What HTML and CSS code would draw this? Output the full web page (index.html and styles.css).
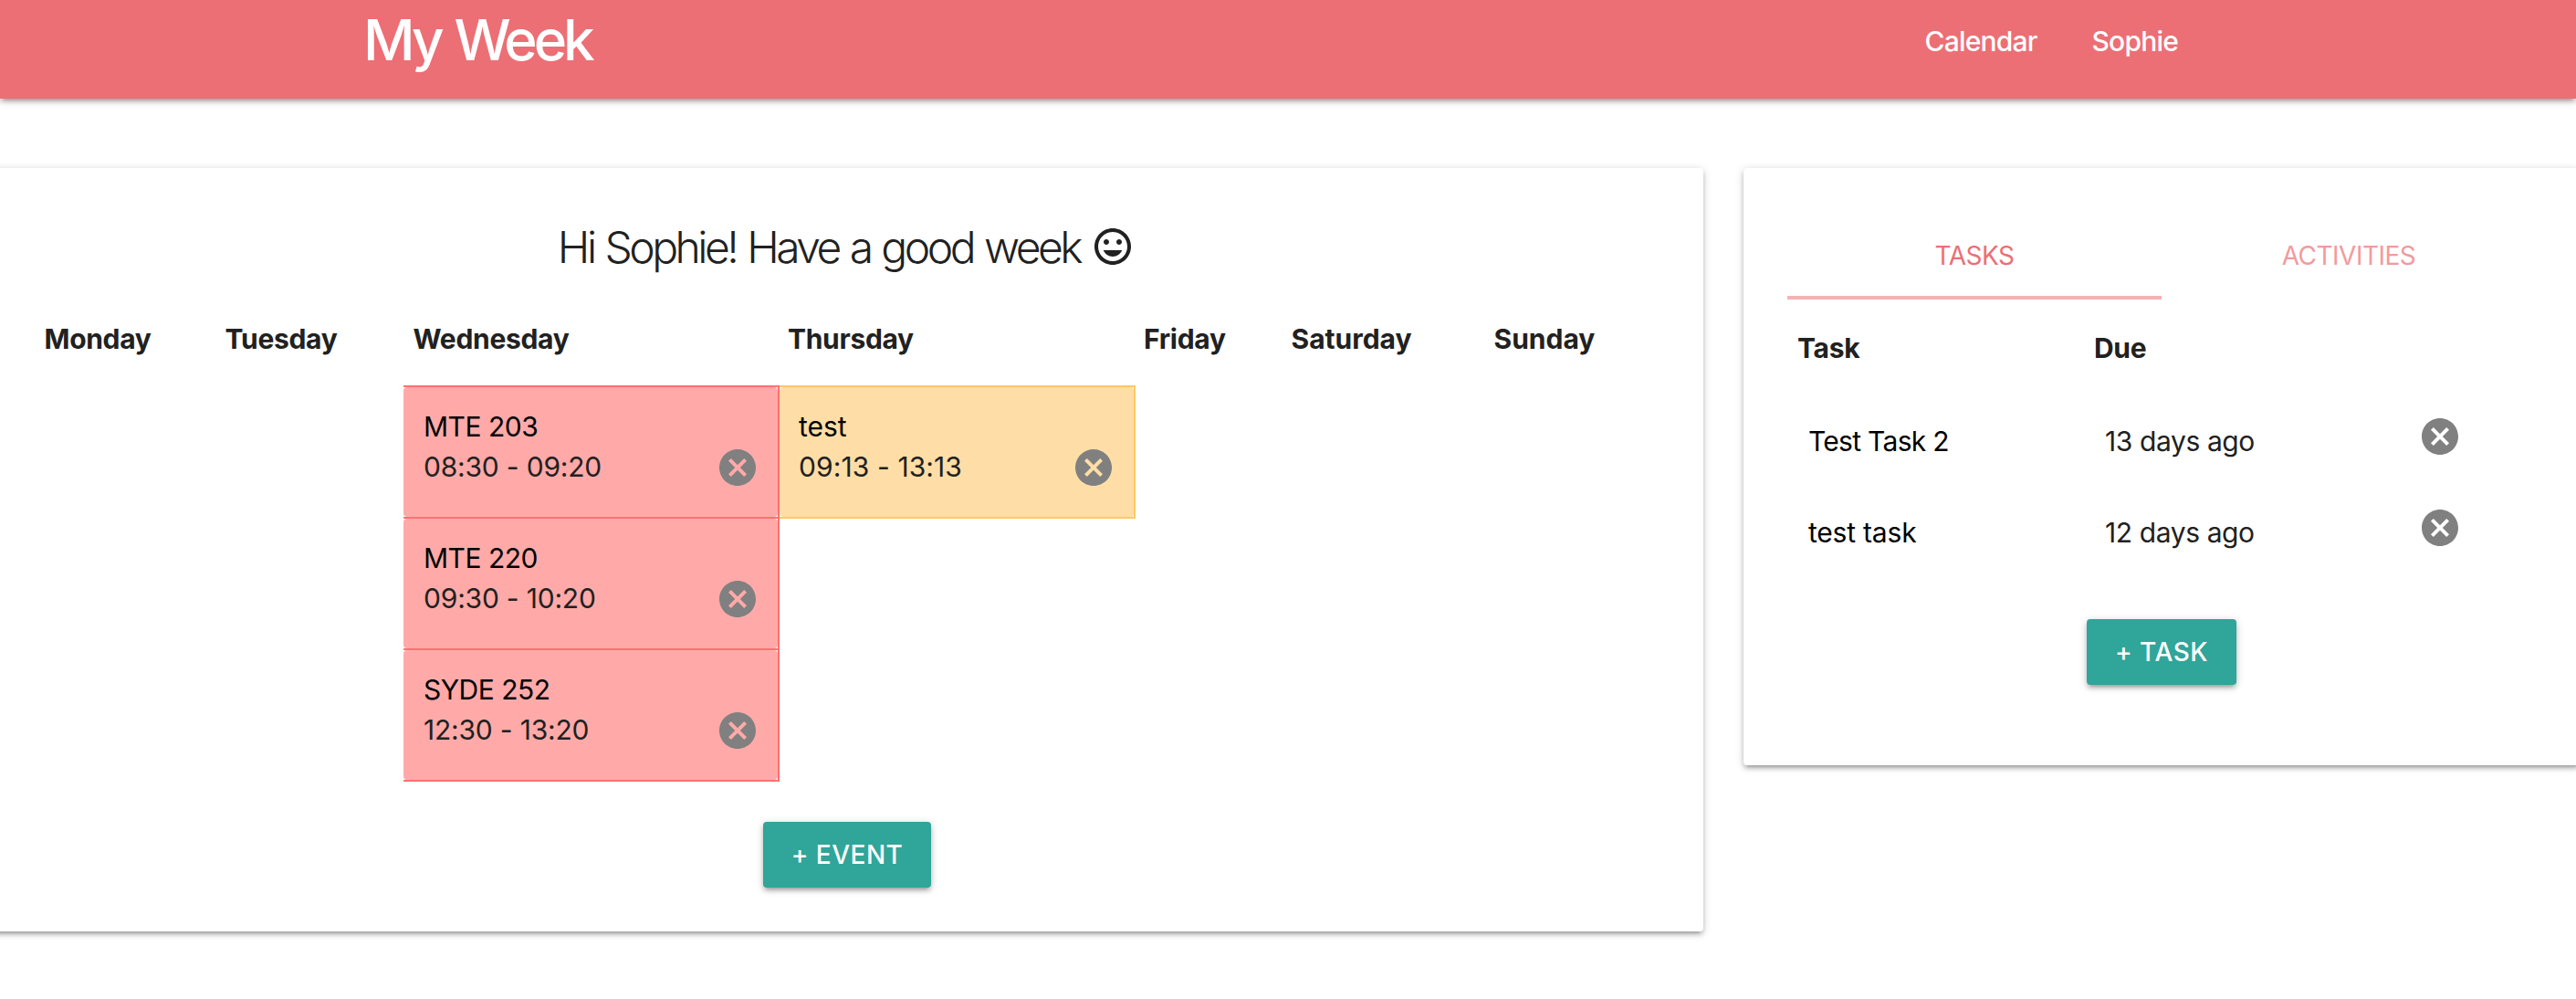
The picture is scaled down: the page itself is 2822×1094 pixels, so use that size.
FILE: index.html
```html
<!DOCTYPE html>
<html lang="en">
<head>
<meta charset="utf-8">
<title>My Week</title>
<link rel="stylesheet" href="styles.css">
</head>
<body>
<svg class="sprite" aria-hidden="true">
  <symbol id="cancel" viewBox="0 0 24 24"><path d="M12 2C6.47 2 2 6.47 2 12s4.47 10 10 10 10-4.47 10-10S17.53 2 12 2zm5 13.59L15.59 17 12 13.41 8.41 17 7 15.59 10.59 12 7 8.41 8.41 7 12 10.59 15.59 7 17 8.41 13.41 12 17 15.59z"/></symbol>
  <symbol id="mood" viewBox="0 0 24 24"><path d="M11.99 2C6.47 2 2 6.48 2 12s4.47 10 9.99 10C17.52 22 22 17.52 22 12S17.52 2 11.99 2zM12 20c-4.42 0-8-3.58-8-8s3.58-8 8-8 8 3.58 8 8-3.58 8-8 8zm3.5-9c.83 0 1.5-.67 1.5-1.5S16.33 8 15.5 8 14 8.67 14 9.5s.67 1.5 1.5 1.5zm-7 0c.83 0 1.5-.67 1.5-1.5S9.33 8 8.5 8 7 8.67 7 9.5 7.67 11 8.5 11zm3.5 6.5c2.33 0 4.31-1.46 5.11-3.5H6.89c.8 2.04 2.78 3.5 5.11 3.5z"/></symbol>
</svg>
<nav class="navbar">
  <a class="brand">My Week</a>
  <div class="nav-links"><a class="nav-link">Calendar</a><a class="nav-link">Sophie</a></div>
</nav>
<main class="columns">
  <section class="card week">
    <h1 class="greeting"><span>Hi Sophie! Have a good week</span><svg class="icon mood"><use href="#mood"/></svg></h1>
    <div class="days">
      <div class="day"><div class="day-name">Monday</div></div>
      <div class="day"><div class="day-name">Tuesday</div></div>
      <div class="day">
        <div class="day-name">Wednesday</div>
        <div class="event red"><div class="event-body"><div><div class="event-title">MTE 203</div><div class="event-time">08:30 - 09:20</div></div><svg class="icon cancel"><use href="#cancel"/></svg></div></div>
        <div class="event red"><div class="event-body"><div><div class="event-title">MTE 220</div><div class="event-time">09:30 - 10:20</div></div><svg class="icon cancel"><use href="#cancel"/></svg></div></div>
        <div class="event red"><div class="event-body"><div><div class="event-title">SYDE 252</div><div class="event-time">12:30 - 13:20</div></div><svg class="icon cancel"><use href="#cancel"/></svg></div></div>
      </div>
      <div class="day">
        <div class="day-name thursday">Thursday</div>
        <div class="event yellow"><div class="event-body"><div><div class="event-title">test</div><div class="event-time">09:13 - 13:13</div></div><svg class="icon cancel"><use href="#cancel"/></svg></div></div>
      </div>
      <div class="day"><div class="day-name friday">Friday</div></div>
      <div class="day"><div class="day-name weekend">Saturday</div></div>
      <div class="day"><div class="day-name weekend">Sunday</div></div>
    </div>
    <button class="btn btn-event">+ EVENT</button>
  </section>
  <section class="card tasks">
    <div class="tabs"><a class="tab active">TASKS</a><a class="tab">ACTIVITIES</a></div>
    <div class="task-row task-head"><div>Task</div><div>Due</div></div>
    <div class="task-row"><div class="task-name">Test Task 2</div><div class="task-due">13 days ago</div><svg class="icon cancel"><use href="#cancel"/></svg></div>
    <div class="task-row"><div class="task-name lower">test task</div><div class="task-due">12 days ago</div><svg class="icon cancel"><use href="#cancel"/></svg></div>
    <button class="btn btn-task">+ TASK</button>
  </section>
</main>
</body>
</html>
```
FILE: styles.css
```css
* { box-sizing: border-box; }
html { overflow: hidden; }
body {
  margin: 0;
  min-height: 1094px;
  background: #fff;
  color: #212121;
  font-family: Inter, "Liberation Sans", sans-serif;
  font-size: 30px;
}
.sprite { display: none; }
.icon { width: 48px; height: 48px; flex: none; fill: currentColor; }
.cancel { color: #808080; }

.navbar {
  display: flex;
  justify-content: space-between;
  height: 108px;
  padding: 0 436px 0 398px;
  background: #ec6f75;
  color: #fff;
  font-weight: 500;
  box-shadow: 0 4px 4px 0 rgba(0,0,0,.14), 0 6px 2px -4px rgba(0,0,0,.12), 0 2px 10px 0 rgba(0,0,0,.2);
}
.brand { font-size: 62px; font-weight: 450; line-height: 87px; letter-spacing: -4.1px; word-spacing: 2.5px; }
.nav-links { display: flex; gap: 60px; letter-spacing: -.8px; }
.nav-link { line-height: 91px; }

.columns { display: flex; align-items: flex-start; gap: 44px; margin: 76px -4px 0 -10px; }
.card {
  flex: none;
  padding: 48px;
  border-radius: 4px;
  background: #fff;
  box-shadow: 0 4px 4px 0 rgba(0,0,0,.14), 0 6px 2px -4px rgba(0,0,0,.12), 0 2px 10px 0 rgba(0,0,0,.2);
}
.week { width: 1876px; height: 836px; padding-top: 58px; }
.greeting {
  display: flex;
  justify-content: center;
  align-items: center;
  gap: 12px;
  height: 56px;
  margin: 0 2px 22px 0;
  font-size: 48px;
  font-weight: 300;
  letter-spacing: -3.5px;
  word-spacing: 1.8px;
}
.days { display: grid; grid-template-columns: 198px 206px 412px 390px 160px 222px 192px; height: 536px; }
.day-name { height: 102px; padding-left: 10.5px; line-height: 102px; font-weight: 700; letter-spacing: -.3px; }
.day-name.thursday, .day-name.friday { padding-left: 9px; }
.day-name.weekend { letter-spacing: 0; }
.event { height: 144px; border: 0 solid; border-width: 2px 2px 0 0; }
.event:last-child { height: 146px; border-bottom-width: 2px; }
.event-body {
  display: flex;
  justify-content: space-between;
  height: 142px;
  padding: 21px 20px 0 22px;
  border-radius: 4px;
  line-height: 44px;
}
.event .icon { margin-top: 43px; }
.event-title { letter-spacing: -.5px; }
.event-time { letter-spacing: -.2px; }
.event.red { border-color: #ff7070; }
.red .event-body { background: #ffaaa8; }
.event.yellow { border-color: #ffc866; }
.yellow .event-body { padding-left: 21px; background: #fedea6; }
.yellow .event-title { letter-spacing: 0; }
.yellow .event-time { letter-spacing: .1px; }
.event-title, .task-name { color: #000; }

.btn {
  display: block;
  height: 72px;
  margin: 44px auto 0;
  padding: 0;
  border: 0;
  border-radius: 4px;
  background: #30a599;
  color: #fff;
  font: 500 28px/72px Inter, "Liberation Sans", sans-serif;
  letter-spacing: .5px;
  box-shadow: 0 4px 4px 0 rgba(0,0,0,.14), 0 6px 2px -4px rgba(0,0,0,.12), 0 2px 10px 0 rgba(0,0,0,.2);
}
.btn-event { width: 184px; }
.btn-task { width: 164px; margin-top: 45px; }

.tasks { width: 916px; height: 654px; }
.tabs { display: flex; height: 96px; }
.tab { flex: 1; text-align: center; font-size: 28px; line-height: 96px; letter-spacing: -.5px; color: #f39a9e; }
.tab.active { color: #ec6f75; border-bottom: 4px solid #f6b1b4; }
.task-row { display: grid; grid-template-columns: 325px 354.5px 1fr; align-items: center; height: 100px; padding-left: 11px; }
.task-head { height: 105px; font-weight: 700; letter-spacing: -.3px; }
.task-name, .task-due { padding-left: 12px; letter-spacing: -.4px; }
.task-name { letter-spacing: -.7px; }
.task-name.lower { letter-spacing: -.2px; }
.task-row .icon { margin-top: -10px; }
```
